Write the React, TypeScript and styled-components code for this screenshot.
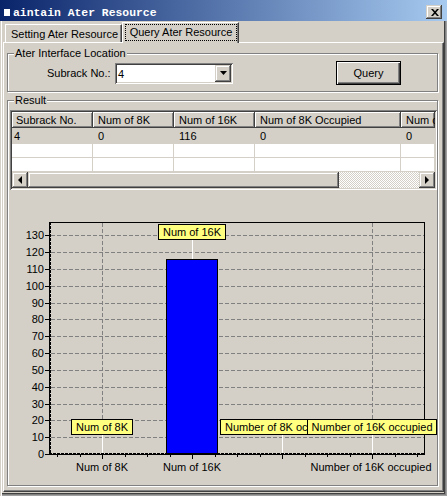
import React from "react";
import styled, { createGlobalStyle, css } from "styled-components";

const FACE = "#D4D0C8";

const GlobalStyle = createGlobalStyle`
  html, body { margin: 0; padding: 0; background: ${FACE}; }
  body { font-family: "Liberation Sans", Arial, sans-serif; font-size: 11px; color: #000; }
  *, *::before, *::after { box-sizing: border-box; }
`;

const raisedEdge = css`
  box-shadow: inset -1px -1px #404040, inset 1px 1px ${FACE}, inset -2px -2px #808080, inset 2px 2px #ffffff;
`;
const sunkenEdge = css`
  box-shadow: inset 1px 1px #808080, inset -1px -1px #ffffff, inset 2px 2px #404040, inset -2px -2px ${FACE};
`;

const Window = styled.div`
  width: 447px;
  height: 496px;
  background: ${FACE};
  display: flex;
  flex-direction: column;
  overflow: hidden;
  box-shadow: inset 1px 0 ${FACE}, inset 2px 0 #ffffff, inset -1px -1px #a0a0a0, inset -2px -2px #808080,
    inset -3px -3px #404040;
`;

const TitleBar = styled.div`
  flex: none;
  height: 21px;
  display: flex;
  justify-content: space-between;
  align-items: flex-start;
  padding: 0 5px 0 4px;
  overflow: hidden;
  background: linear-gradient(to right, #0a246a 0%, #a6caf0 100%);
`;

const TitleText = styled.div`
  font-family: "Liberation Mono", "Courier New", monospace;
  font-weight: bold;
  font-size: 11.4px;
  line-height: 26px;
  height: 21px;
  color: #ffffff;
  white-space: nowrap;
`;

const TitleGlyph = styled.span`
  display: inline-block;
  width: 6px;
  height: 7px;
  margin-right: 3px;
  background: #ffffff;
  vertical-align: baseline;
`;

const CloseButton = styled.div`
  width: 16px;
  height: 14px;
  margin-top: 5px;
  padding-left: 1px;
  background: ${FACE};
  ${raisedEdge};
  display: flex;
  align-items: center;
  justify-content: center;
`;

const Body = styled.div`
  flex: 1;
  display: flex;
  flex-direction: column;
  padding: 0 3px 4px 3px;
`;

const TabStrip = styled.div`
  flex: none;
  height: 21px;
  display: flex;
  align-items: flex-end;
  padding-left: 2px;
`;

const Tab = styled.div<{ $active?: boolean }>`
  position: relative;
  z-index: ${(p) => (p.$active ? 1 : 0)};
  width: 117px;
  height: ${(p) => (p.$active ? 21 : 18)}px;
  margin-bottom: ${(p) => (p.$active ? -1 : 0)}px;
  background: ${FACE};
  border-top: 1px solid #ffffff;
  border-left: 1px solid #ffffff;
  border-right: 1px solid #404040;
  box-shadow: inset -1px 0 #808080;
  display: flex;
  align-items: ${(p) => (p.$active ? "flex-start" : "center")};
  padding: ${(p) => (p.$active ? "1px 0 0 2px" : "1px 0 0 5px")};
  white-space: nowrap;
  line-height: 13px;
`;

const TabFocus = styled.div`
  width: 112px;
  height: 17px;
  border: 1px dotted #000000;
  display: flex;
  align-items: center;
  justify-content: center;
`;

const Panel = styled.div`
  flex: none;
  height: 450px;
  display: flex;
  flex-direction: column;
  border-top: 1px solid #ffffff;
  border-left: 1px solid #ffffff;
  border-right: 1px solid #404040;
  border-bottom: 1px solid #404040;
  box-shadow: inset -1px -1px #808080;
  padding: 10px 5px 5px 3px;
`;

const GroupBox = styled.div<{ $h: number; $mt?: number }>`
  position: relative;
  flex: none;
  height: ${(p) => p.$h}px;
  margin-top: ${(p) => p.$mt ?? 0}px;
  border: 1px solid #808080;
  box-shadow: inset 1px 1px #ffffff, 1px 1px #ffffff;
`;

const Legend = styled.span`
  position: absolute;
  top: -8px;
  left: 6px;
  padding: 0 1px;
  line-height: 14px;
  background: ${FACE};
  white-space: nowrap;
`;

const LocationRow = styled.div`
  display: flex;
  align-items: center;
  height: 100%;
  padding: 7px 0 6px 39px;
`;

const FieldLabel = styled.span`
  width: 68px;
  flex: none;
  white-space: nowrap;
`;

const Combo = styled.div`
  width: 118px;
  height: 21px;
  flex: none;
  background: #ffffff;
  ${sunkenEdge};
  padding: 2px;
  display: flex;
  align-items: center;
  justify-content: space-between;
`;

const ComboValue = styled.span`
  padding-left: 1px;
  padding-top: 1px;
`;

const DropButton = styled.div`
  width: 16px;
  height: 17px;
  background: ${FACE};
  ${raisedEdge};
  display: flex;
  align-items: center;
  justify-content: center;
  padding-left: 1px;
`;

const QueryButton = styled.div`
  width: 65px;
  height: 24px;
  flex: none;
  margin-left: 103px;
  border: 1px solid #000000;
  background: ${FACE};
  box-shadow: inset 1px 1px #ffffff, inset -1px -1px #404040, inset -2px -2px #808080;
  display: flex;
  align-items: center;
  justify-content: center;
`;

const ResultBody = styled.div`
  display: flex;
  flex-direction: column;
  padding-top: 9px;
  height: 100%;
`;

const ListView = styled.div`
  margin-left: 2px;
  width: 427px;
  height: 80px;
  flex: none;
  background: #ffffff;
  padding: 2px;
  ${sunkenEdge};
  display: flex;
  flex-direction: column;
  overflow: hidden;
`;

const HeaderRow = styled.div`
  display: flex;
  flex: none;
  height: 16px;
`;

const HeaderCell = styled.div<{ $w?: number; $pad: number }>`
  ${(p) => (p.$w ? `width: ${p.$w}px; flex: none;` : "flex: 1; min-width: 0;")}
  background: ${FACE};
  box-shadow: inset -1px -1px #404040, inset 1px 1px #ffffff, inset -2px -2px #808080;
  padding-left: ${(p) => p.$pad}px;
  line-height: 16px;
  white-space: nowrap;
  overflow: hidden;
`;

const Row = styled.div<{ $h: number; $bg: string }>`
  display: flex;
  flex: none;
  height: ${(p) => p.$h}px;
  background: ${(p) => p.$bg};
  border-bottom: 1px solid ${FACE};
  overflow: hidden;
`;

const Cell = styled.div<{ $w?: number; $pad: number }>`
  ${(p) => (p.$w ? `width: ${p.$w}px; flex: none;` : "flex: 1; min-width: 0;")}
  border-right: 1px solid ${FACE};
  padding: 1px 0 0 ${(p) => p.$pad}px;
  line-height: 14px;
  white-space: nowrap;
  overflow: hidden;
`;

const ScrollBar = styled.div`
  display: flex;
  flex: none;
  height: 16px;
`;

const ScrollButton = styled.div`
  width: 16px;
  height: 16px;
  flex: none;
  background: ${FACE};
  ${raisedEdge};
  display: flex;
  align-items: center;
  justify-content: center;
`;

const ScrollThumb = styled.div<{ $w: number }>`
  width: ${(p) => p.$w}px;
  height: 16px;
  flex: none;
  background: ${FACE};
  ${raisedEdge};
`;

const ScrollTrack = styled.div`
  flex: 1;
  height: 16px;
  background-color: #ffffff;
  background-image: repeating-conic-gradient(${FACE} 0% 25%, #ffffff 0% 50%);
  background-size: 2px 2px;
`;

const ChartSvg = styled.svg`
  display: block;
  flex: none;
  font-family: "Liberation Sans", Arial, sans-serif;
  font-size: 11px;
`;

const columns = [
  { title: "Subrack No.", w: 81, hp: 4, cp: 2 },
  { title: "Num of 8K", w: 81, hp: 5, cp: 5 },
  { title: "Num of 16K", w: 81, hp: 5, cp: 5 },
  { title: "Num of 8K Occupied", w: 146, hp: 5, cp: 5 },
  { title: "Num of 16K Occupied", w: undefined, hp: 5, cp: 5 },
];

const rows: { h: number; bg: string; values: string[] }[] = [
  { h: 16, bg: FACE, values: ["4", "0", "116", "0", "0"] },
  { h: 14, bg: "#ffffff", values: ["", "", "", "", ""] },
  { h: 14, bg: "#ffffff", values: ["", "", "", "", ""] },
];

const Y0 = 454;
const SCALE = 1.683;
const yOf = (v: number) => Y0 - v * SCALE;

const yTicks = [0, 10, 20, 30, 40, 50, 60, 70, 80, 90, 100, 110, 120, 130];
const majorX = [102.5, 192.5, 282.5, 372.5];
const minorX = Array.from({ length: 17 }, (_, k) => Math.round((57.3 + 22.5 * k) * 2) / 2 + 0.0)
  .filter((_, k) => k % 4 !== 2);

const labelBoxes = [
  { text: "Num of 8K", x: 71.5, y: 419.5, w: 61, cx: 102 },
  { text: "Number of 8K occupied", x: 220.5, y: 419.5, w: 124, cx: 282.5 },
  { text: "Number of 16K occupied", x: 307.5, y: 419.5, w: 129, cx: 372 },
  { text: "Num of 16K", x: 158.5, y: 224.5, w: 67, cx: 192 },
];

const BarChart: React.FC = () => (
  <ChartSvg width={429} height={295} viewBox="8 190 429 295">
    {/* frame */}
    <line x1={49} y1={222.5} x2={425} y2={222.5} stroke="#000" />
    <line x1={424.5} y1={222} x2={424.5} y2={455} stroke="#000" />
    {/* horizontal grid */}
    {yTicks.slice(1).map((v) => {
      const y = Math.round(yOf(v)) + 0.5;
      return <line key={v} x1={51} y1={y} x2={424} y2={y} stroke="#808080" strokeDasharray="4 2" />;
    })}
    {/* vertical grid */}
    {[102.5, 372.5].map((x) => (
      <line key={x} x1={x} y1={223} x2={x} y2={453} stroke="#808080" strokeDasharray="4 2" />
    ))}
    {/* bar */}
    <rect x={166.5} y={259.5} width={51} height={194} fill="#0000ff" stroke="#000" />
    {/* axes */}
    <line x1={49.5} y1={222} x2={49.5} y2={455} stroke="#000" />
    <line x1={50.5} y1={222} x2={50.5} y2={455} stroke="#000" strokeDasharray="3 1" />
    <line x1={49} y1={453.5} x2={425} y2={453.5} stroke="#000" strokeDasharray="3 1" />
    <line x1={49} y1={454.5} x2={425} y2={454.5} stroke="#000" />
    {/* y ticks + labels */}
    {yTicks.map((v) => {
      const y = Math.round(yOf(v)) + 0.5;
      return (
        <g key={v}>
          <line x1={45} y1={y} x2={49} y2={y} stroke="#000" />
          <text x={44} y={y + 3.5} textAnchor="end" fill="#000">
            {v}
          </text>
        </g>
      );
    })}
    {/* x ticks */}
    {minorX.map((x) => (
      <line key={x} x1={Math.floor(x) + 0.5} y1={455} x2={Math.floor(x) + 0.5} y2={457} stroke="#000" />
    ))}
    {majorX.map((x) => (
      <line key={x} x1={x} y1={455} x2={x} y2={459} stroke="#000" />
    ))}
    {/* x labels */}
    <text x={102} y={471} textAnchor="middle" fill="#000">Num of 8K</text>
    <text x={192} y={471} textAnchor="middle" fill="#000">Num of 16K</text>
    <text x={371} y={471} textAnchor="middle" fill="#000">Number of 16K occupied</text>
    {/* leaders */}
    <line x1={192.5} y1={240} x2={192.5} y2={259} stroke="#fff" />
    {[102.5, 282.5, 372.5].map((x) => (
      <line key={x} x1={x} y1={435} x2={x} y2={453} stroke="#fff" />
    ))}
    {/* label boxes */}
    {labelBoxes.map((b) => (
      <g key={b.text}>
        <rect x={b.x} y={b.y} width={b.w} height={15} fill="#ffff80" stroke="#000" />
        <text x={b.cx} y={b.y + 11.5} textAnchor="middle" fill="#000">
          {b.text}
        </text>
      </g>
    ))}
  </ChartSvg>
);

const CloseGlyph = () => (
  <svg width="8" height="7" viewBox="0 0 8 7">
    <path d="M0 0 H2 L4 2.3 L6 0 H8 L5 3.5 L8 7 H6 L4 4.7 L2 7 H0 L3 3.5 Z" fill="#000" />
  </svg>
);

const DownArrow = () => (
  <svg width="7" height="4" viewBox="0 0 7 4">
    <polygon points="0,0 7,0 3.5,4" fill="#000" />
  </svg>
);

const LeftArrow = () => (
  <svg width="4" height="8" viewBox="0 0 4 8">
    <polygon points="4,0 4,8 0,4" fill="#000" />
  </svg>
);

const RightArrow = () => (
  <svg width="4" height="8" viewBox="0 0 4 8">
    <polygon points="0,0 0,8 4,4" fill="#000" />
  </svg>
);

export default function App() {
  return (
    <>
      <GlobalStyle />
      <Window>
        <TitleBar>
          <TitleText>
            <TitleGlyph />
            aintain Ater Resource
          </TitleText>
          <CloseButton>
            <CloseGlyph />
          </CloseButton>
        </TitleBar>
        <Body>
          <TabStrip>
            <Tab>Setting Ater Resource</Tab>
            <Tab $active>
              <TabFocus>Query Ater Resource</TabFocus>
            </Tab>
          </TabStrip>
          <Panel>
            <GroupBox $h={39}>
              <Legend>Ater Interface Location</Legend>
              <LocationRow>
                <FieldLabel>Subrack No.:</FieldLabel>
                <Combo>
                  <ComboValue>4</ComboValue>
                  <DropButton>
                    <DownArrow />
                  </DropButton>
                </Combo>
                <QueryButton>Query</QueryButton>
              </LocationRow>
            </GroupBox>
            <GroupBox $h={386} $mt={8}>
              <Legend>Result</Legend>
              <ResultBody>
                <ListView>
                  <HeaderRow>
                    {columns.map((c) => (
                      <HeaderCell key={c.title} $w={c.w} $pad={c.hp}>
                        {c.title}
                      </HeaderCell>
                    ))}
                  </HeaderRow>
                  {rows.map((r, i) => (
                    <Row key={i} $h={r.h} $bg={r.bg}>
                      {columns.map((c, j) => (
                        <Cell key={c.title} $w={c.w} $pad={c.cp}>
                          {r.values[j]}
                        </Cell>
                      ))}
                    </Row>
                  ))}
                  <ScrollBar>
                    <ScrollButton>
                      <LeftArrow />
                    </ScrollButton>
                    <ScrollThumb $w={311} />
                    <ScrollTrack />
                    <ScrollButton>
                      <RightArrow />
                    </ScrollButton>
                  </ScrollBar>
                </ListView>
                <BarChart />
              </ResultBody>
            </GroupBox>
          </Panel>
        </Body>
      </Window>
    </>
  );
}
